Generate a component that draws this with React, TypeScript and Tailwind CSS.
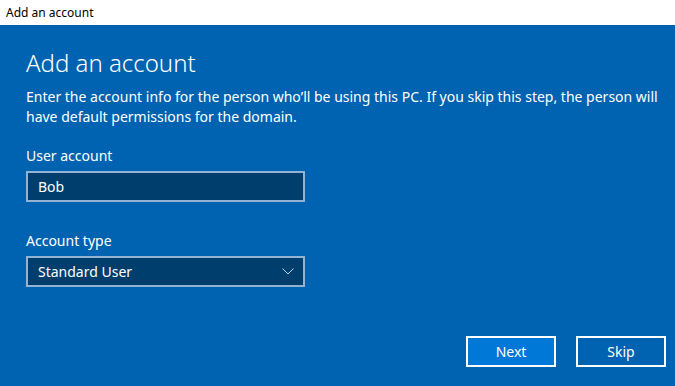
import React, { useState } from 'react';

export default function App() {
  const [user, setUser] = useState('Bob');

  return (
    <div className="w-[675px] h-[386px] flex flex-col bg-[#0063b1] overflow-hidden" style={{ fontFamily: '"Noto Sans", "Open Sans", sans-serif' }}>
      <div className="h-[25px] bg-white flex items-center px-[6px] text-[12px] text-black shrink-0">
        Add an account
      </div>

      <div className="flex-1 flex flex-col px-[26px] text-white">
        <h1 className="mt-[22px] text-[24px] leading-[32px] font-light">Add an account</h1>
        <p className="mt-[8px] mr-[-20px] text-[14px] leading-[20px]">
          Enter the account info for the person who’ll be using this PC. If you skip this step, the person will have default permissions for the domain.
        </p>

        <label className="mt-[19px] text-[14px] leading-[20px]">User account</label>
        <input
          value={user}
          onChange={(e) => setUser(e.target.value)}
          className="mt-[5px] w-[279px] h-[31px] border-2 border-[#93b3d2] bg-[#003e6e] px-[10px] text-[14px] text-white outline-none"
        />

        <label className="mt-[29px] text-[14px] leading-[20px]">Account type</label>
        <div className="mt-[5px] w-[279px] h-[31px] border-2 border-[#93b3d2] bg-[#003e6e] px-[10px] flex items-center justify-between text-[14px]">
          <span>Standard User</span>
          <svg width="12" height="7" viewBox="0 0 12 7" className="mr-[-1px]">
            <path d="M0.5 0.5 L6 6 L11.5 0.5" fill="none" stroke="#c8d6e4" strokeWidth="1" />
          </svg>
        </div>

        <div className="mt-auto mb-[19px] flex justify-end gap-[20px] mr-[-17px]">
          <button className="w-[90px] h-[31px] border-2 border-white bg-[#0078d7] text-[14px] text-white">Next</button>
          <button className="w-[90px] h-[31px] border-2 border-white bg-[#0063b1] text-[14px] text-white">Skip</button>
        </div>
      </div>
    </div>
  );
}
